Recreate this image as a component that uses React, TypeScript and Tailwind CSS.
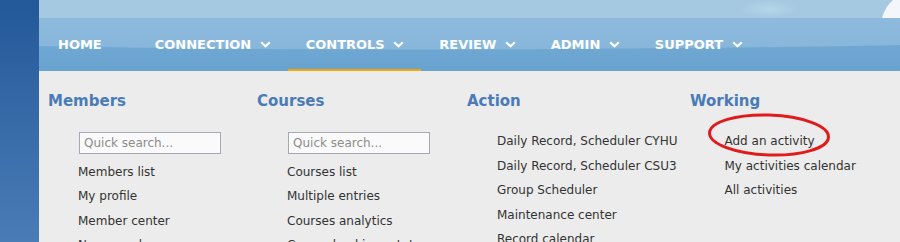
import React from "react";

type NavItem = { label: string; menu?: boolean; active?: boolean };

const nav: NavItem[] = [
  { label: "HOME" },
  { label: "CONNECTION", menu: true },
  { label: "CONTROLS", menu: true, active: true },
  { label: "REVIEW", menu: true },
  { label: "ADMIN", menu: true },
  { label: "SUPPORT", menu: true },
];

function Chevron() {
  return (
    <svg width="11" height="7" viewBox="0 0 11 7" className="ml-[8.5px]" fill="none" stroke="white" strokeWidth="2.2">
      <path d="M1.2 1.3 L5.5 5.2 L9.8 1.3" />
    </svg>
  );
}

function NavBar() {
  return (
    <nav className="relative h-[53px] shrink-0">
      {/* two-tone band with a soft wave between the halves */}
      <svg className="absolute inset-0 h-full w-full" viewBox="0 0 861 53" preserveAspectRatio="none">
        <defs>
          <linearGradient id="navTop" x1="0" y1="0" x2="0" y2="1">
            <stop offset="0" stopColor="#8dbadd" />
            <stop offset="1" stopColor="#84b4d9" />
          </linearGradient>
          <linearGradient id="navBottom" x1="0" y1="0" x2="0" y2="1">
            <stop offset="0" stopColor="#70a8d3" />
            <stop offset="1" stopColor="#68a2cf" />
          </linearGradient>
        </defs>
        <rect width="861" height="53" fill="url(#navTop)" />
        <path d="M0 28 Q 250 33 520 31 T 861 27 L 861 53 L 0 53 Z" fill="url(#navBottom)" />
      </svg>
      <ul className="relative flex h-full ml-[1px]">
        {nav.map((item) => (
          <li
            key={item.label}
            className={
              item.active
                ? "flex items-center pl-[18px] pr-[17px] shadow-[inset_0_-2px_0_#f5a600]"
                : "flex items-center pl-[18px] pr-[17px]"
            }
          >
            <span className="text-[13px] font-bold text-white leading-none">{item.label}</span>
            {item.menu ? <Chevron /> : <span className="w-[18px]" />}
          </li>
        ))}
      </ul>
    </nav>
  );
}

function Heading({ children }: { children: React.ReactNode }) {
  return <h3 className="text-[15px] font-bold leading-[20px] text-[#4a7bb7]">{children}</h3>;
}

function Links({ items, indent = "pl-[30px]" }: { items: string[]; indent?: string }) {
  return (
    <ul className={indent}>
      {items.map((t) => (
        <li key={t} className="text-[12px] leading-[24.6px] text-[#333333] whitespace-nowrap">
          {t}
        </li>
      ))}
    </ul>
  );
}

function Search() {
  return (
    <div className="pl-[31px] pt-[3px] pb-[5.5px]">
      <input
        placeholder="Quick search..."
        className="block h-[22px] w-[142px] border border-[#a7a7b5] bg-[#fafafa] px-[4px] text-[12px] text-[#333] placeholder:text-[#8c8c8c] outline-none"
      />
    </div>
  );
}

export default function App() {
  return (
    <div className="flex h-[242px] w-[900px] overflow-hidden font-['DejaVu_Sans',Verdana,sans-serif]">
      <aside className="w-[39px] shrink-0 bg-gradient-to-b from-[#235899] to-[#4a7db6]" />
      <div className="flex min-w-0 flex-1 flex-col">
        <div className="relative h-[18px] shrink-0 bg-[#a6c9e2]">
          <div className="absolute left-[700px] top-0 h-[18px] w-[60px] bg-[radial-gradient(ellipse_at_center,#b3d6ea_0%,rgba(166,201,226,0)_70%)]" />
          <svg className="absolute right-0 top-0" width="20" height="18" viewBox="0 0 20 18">
            <path d="M2 18 Q 5 7 13 0 L20 0 L20 18 Z" fill="#f3f7fb" />
          </svg>
        </div>
        <NavBar />
        <div className="flex min-h-0 flex-1 overflow-hidden bg-[#ececec] pl-[9px] pt-[20px]">
          <section className="w-[209px] shrink-0">
            <Heading>Members</Heading>
            <div className="mt-[18px]">
              <Search />
              <Links items={["Members list", "My profile", "Member center", "New member"]} />
            </div>
          </section>
          <section className="w-[210px] shrink-0">
            <Heading>Courses</Heading>
            <div className="mt-[18px]">
              <Search />
              <Links items={["Courses list", "Multiple entries", "Courses analytics", "Course bookings stats"]} />
            </div>
          </section>
          <section className="w-[223px] shrink-0">
            <Heading>Action</Heading>
            <div className="mt-[18px]">
              <Links
                items={[
                  "Daily Record, Scheduler CYHU",
                  "Daily Record, Scheduler CSU3",
                  "Group Scheduler",
                  "Maintenance center",
                  "Record calendar",
                ]}
              />
            </div>
          </section>
          <section className="flex-1">
            <Heading>Working</Heading>
            <div className="relative mt-[18px]">
              <Links items={["Add an activity", "My activities calendar", "All activities"]} indent="pl-[34.5px]" />
              {/* hand-drawn highlight round the first entry */}
              <svg
                className="pointer-events-none absolute left-[17px] top-[-16px] rotate-[2deg]"
                width="124"
                height="44"
                viewBox="0 0 124 44"
                fill="none"
              >
                <ellipse cx="62" cy="22" rx="59.5" ry="20" stroke="#e11b1b" strokeWidth="3" />
              </svg>
            </div>
          </section>
        </div>
      </div>
    </div>
  );
}
